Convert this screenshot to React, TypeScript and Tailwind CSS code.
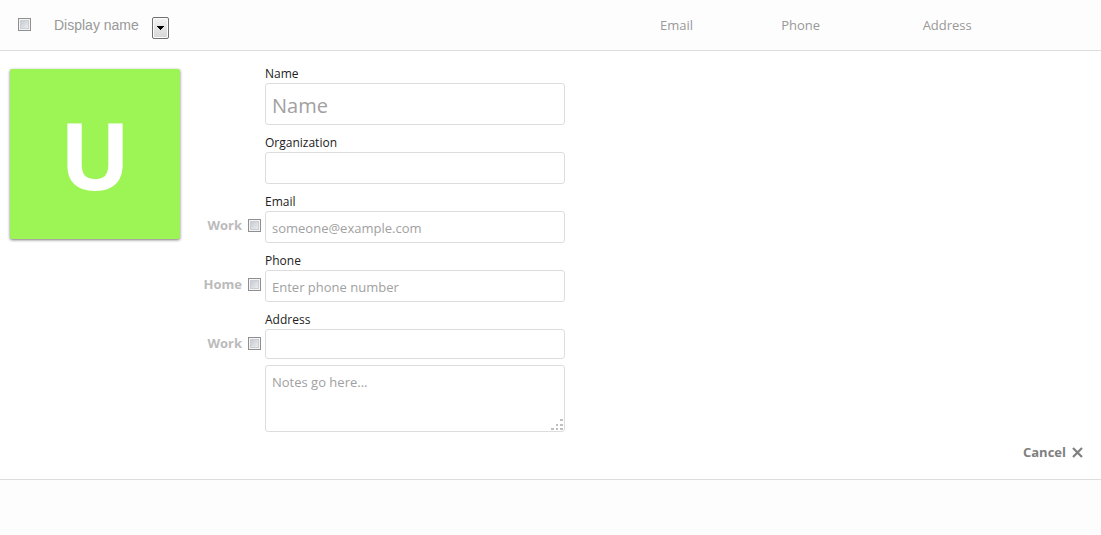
import React from "react";

const checkboxClass =
  "m-0 block size-[13px] shrink-0 appearance-none border border-[#8e8f8f] bg-linear-to-br from-[#bcc2c9] to-[#f6f6f6] shadow-[inset_0_0_0_1px_#f4f4f4,inset_0_0_0_2px_#cbcfd5]";

const inputClass =
  "block w-full rounded-[3px] border border-[#dddddd] bg-white px-1.5 text-[#333333] outline-none placeholder:text-[#a1a1a1]";

type FieldProps = {
  id: string;
  label: string;
  kind?: string;
  placeholder?: string;
  sizeClass?: string;
};

function Field({ id, label, kind, placeholder, sizeClass = "h-8 pt-[3px] text-[13px]" }: FieldProps) {
  return (
    <div className="flex items-start">
      <div className="flex w-[69px] shrink-0 justify-end pt-6 pr-1">
        {kind && (
          <label className="flex items-center gap-1.5 text-[13px] leading-[17px] font-bold text-[#bbbbbb]">
            {kind}
            <input type="checkbox" className={checkboxClass} />
          </label>
        )}
      </div>
      <div className="w-[300px]">
        <label htmlFor={id} className="block text-xs leading-[18px] text-[#222222]">
          {label}
        </label>
        <input id={id} placeholder={placeholder} className={`${inputClass} ${sizeClass}`} />
      </div>
    </div>
  );
}

function ActionSelect() {
  return (
    <span className="relative block h-[22px] w-[17px]">
      <select
        aria-label="Actions"
        className="block size-full appearance-none rounded-[2px] border border-[#707070] bg-linear-to-b from-[#f3f3f3] to-[#d6d6d6] shadow-[inset_0_0_0_1px_#fcfcfc]"
      >
        <option value="" />
      </select>
      <svg
        viewBox="0 0 7 4"
        className="pointer-events-none absolute top-[9px] left-[5px] h-1 w-[7px]"
        shapeRendering="crispEdges"
      >
        <path d="M0 0h7v1h-1v1h-1v1h-1v1h-1v-1h-1v-1h-1v-1h-1z" fill="#000" />
      </svg>
    </span>
  );
}

export default function App() {
  return (
    <main className="min-h-screen bg-[#fdfdfd] font-['Open_Sans','Noto_Sans',sans-serif]">
      <table className="w-full table-fixed border-collapse bg-[#fdfdfd] text-left text-[13px]">
        <colgroup>
          <col className="w-[59.95%]" />
          <col className="w-[11%]" />
          <col className="w-[12.85%]" />
          <col />
        </colgroup>
        <thead>
          <tr className="h-[50px] border-b border-[#dddddd] text-[#999999]">
            <th className="p-0 font-normal">
              <div className="flex items-center pt-1.5 pl-[18px]">
                <input
                  type="checkbox"
                  id="all"
                  aria-label="Select all"
                  className={`${checkboxClass} mb-1.5`}
                />
                <span className="mb-1.5 ml-[23px] font-['Liberation_Sans',Arial,sans-serif] text-sm">
                  Display name
                </span>
                <span className="ml-[13px]">
                  <ActionSelect />
                </span>
              </div>
            </th>
            <th className="p-0 pt-0.5 font-normal">Email</th>
            <th className="p-0 pt-0.5 font-normal">Phone</th>
            <th className="p-0 pt-0.5 font-normal">Address</th>
          </tr>
        </thead>
      </table>

      <section className="border-b border-[#dddddd] bg-white pb-[17px]">
        <form className="flex items-start pt-3.5 pl-2.5">
          <div className="mt-1 flex size-[170px] shrink-0 items-center justify-center rounded-[2px] bg-[#9df555] shadow-[0_1px_3px_#777777]">
            <span className="font-['Open_Sans',sans-serif] text-[94px] leading-none font-bold text-white">
              U
            </span>
          </div>
          <div className="ml-4">
            <div className="flex flex-col gap-[9px]">
              <Field id="name" label="Name" placeholder="Name" sizeClass="h-[42px] pt-[3px] text-xl" />
              <Field id="organization" label="Organization" />
              <Field id="email" label="Email" kind="Work" placeholder="someone@example.com" />
              <Field id="phone" label="Phone" kind="Home" placeholder="Enter phone number" />
              <Field id="address" label="Address" kind="Work" sizeClass="h-[30px] text-[13px]" />
            </div>
            <div className="relative mt-1.5 ml-[69px] w-[300px]">
              <textarea
                aria-label="Notes"
                placeholder="Notes go here..."
                className={`${inputClass} h-[67px] resize-none py-[7px] text-[13px] leading-[18px]`}
              />
              <svg
                viewBox="0 0 12 12"
                className="pointer-events-none absolute right-0.5 bottom-px size-3"
                fill="#c0c0c0"
                shapeRendering="crispEdges"
              >
                <path d="M9 0h3v2h-3zM5 5h2v2h-2zM9 5h3v2h-3zM0 9h3v2h-3zM5 9h2v2h-2zM9 9h3v2h-3z" />
              </svg>
            </div>
          </div>
        </form>
        <div className="flex justify-end pt-[11px] pr-[18px]">
          <button
            type="button"
            className="flex items-center gap-1.5 text-[13px] leading-[19px] font-bold text-[#808080]"
          >
            Cancel
            <svg viewBox="0 0 11 11" className="size-[11px]" stroke="#808080" strokeWidth="2.2">
              <path d="M1 1L10 10M10 1L1 10" />
            </svg>
          </button>
        </div>
      </section>
    </main>
  );
}
